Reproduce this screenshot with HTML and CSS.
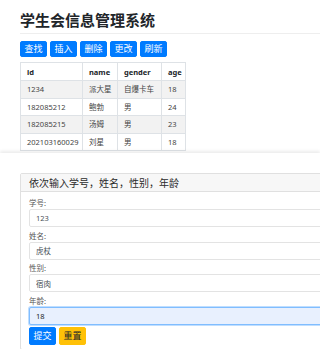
FILE: index.html
```
<!DOCTYPE html>
<html lang="zh-CN">
<head>
    <meta charset="UTF-8">
    <meta name="viewport" content="width=device-width, initial-scale=1.0">
    <title>学生会信息管理系统</title>
    <link rel="stylesheet" href="styles.css">
</head>
<body>
    <div class="container">
        <h1 class="page-header">学生会信息管理系统</h1>
        <div class="toolbar">
            <button class="btn btn-primary">查找</button>
            <button class="btn btn-primary">插入</button>
            <button class="btn btn-primary">删除</button>
            <button class="btn btn-primary">更改</button>
            <button class="btn btn-primary">刷新</button>
        </div>
        <table class="table">
            <colgroup>
                <col class="col-id">
                <col class="col-name">
                <col class="col-gender">
                <col class="col-age">
            </colgroup>
            <thead>
                <tr>
                    <th>id</th>
                    <th>name</th>
                    <th>gender</th>
                    <th>age</th>
                </tr>
            </thead>
            <tbody>
                <tr>
                    <td>1234</td>
                    <td>派大星</td>
                    <td>自爆卡车</td>
                    <td>18</td>
                </tr>
                <tr>
                    <td>182085212</td>
                    <td>鲍勃</td>
                    <td>男</td>
                    <td>24</td>
                </tr>
                <tr>
                    <td>182085215</td>
                    <td>汤姆</td>
                    <td>男</td>
                    <td>23</td>
                </tr>
                <tr>
                    <td>202103160029</td>
                    <td>刘星</td>
                    <td>男</td>
                    <td>18</td>
                </tr>
            </tbody>
        </table>
    </div>

    <div class="sheet">
        <div class="card">
            <div class="card-header">依次输入学号，姓名，性别，年龄</div>
            <form class="card-body">
                <label for="sid">学号:</label>
                <input id="sid" class="form-control" type="text" value="123">
                <label for="sname">姓名:</label>
                <input id="sname" class="form-control" type="text" value="虎杖">
                <label for="sgender">性别:</label>
                <input id="sgender" class="form-control" type="text" value="宿肉">
                <label for="sage">年龄:</label>
                <input id="sage" class="form-control is-focused" type="text" value="18">
                <div class="actions">
                    <button type="button" class="btn btn-primary btn-form">提交</button>
                    <button type="reset" class="btn btn-warning btn-form">重置</button>
                </div>
            </form>
        </div>
    </div>
</body>
</html>
```

FILE: styles.css
```
body {
    margin: 0;
    padding: 0;
    font-family: "Noto Sans", "Noto Sans CJK SC", sans-serif;
    color: #212529;
    background-color: #fff;
    overflow: hidden;
}

.container {
    padding: 0 0 0 20px;
}

.page-header {
    margin: 10px 0 0;
    padding-bottom: 3px;
    font-size: 15px;
    line-height: 20px;
    font-weight: bold;
    border-bottom: 1px solid #eee;
}

.toolbar {
    display: flex;
    gap: 3px;
    margin-top: 7px;
}

.btn {
    font-family: inherit;
    font-size: 9px;
    line-height: 14px;
    padding: 0 3.5px;
    border: 1px solid transparent;
    border-radius: 2px;
    cursor: pointer;
}

.btn-primary {
    background-color: #007bff;
    border-color: #007bff;
    color: #fff;
}

.btn-warning {
    background-color: #ffc107;
    border-color: #ffc107;
    color: #212529;
}

.table {
    margin-top: 5px;
    width: 165px;
    table-layout: fixed;
    border-collapse: collapse;
    font-size: 7.5px;
}

.col-id { width: 62px; }
.col-name { width: 35px; }
.col-gender { width: 44px; }
.col-age { width: 24px; }

.table th,
.table td {
    padding: 3px 0 3px 6px;
    line-height: 10.4px;
    text-align: left;
    border: 1px solid #dee2e6;
    white-space: nowrap;
    color: #444;
}

.table th {
    color: #212529;
    font-weight: bold;
    padding-top: 3.5px;
    padding-bottom: 3.5px;
}

.table tbody tr:nth-child(odd) td {
    background-color: #f2f2f2;
}

.sheet {
    margin-top: 2px;
    padding: 20px 0 0 20px;
    height: 177px;
    overflow: hidden;
    background-color: #fff;
    box-shadow: 0 -2px 3px rgba(0, 0, 0, 0.08);
}

.card {
    width: 340px;
    border: 1px solid #e0e0e0;
    border-radius: 2px;
}

.card-header {
    padding: 3px 9px 2px 8px;
    font-size: 10px;
    line-height: 12px;
    color: #2b2b2b;
    background-color: #f7f7f7;
    border-bottom: 1px solid #e0e0e0;
}

.card-body {
    padding: 6px 9px 4px 8px;
}

.card-body label {
    display: block;
    font-size: 7.5px;
    line-height: 11px;
    color: #555;
}

.form-control {
    display: block;
    box-sizing: border-box;
    width: 100%;
    height: 18px;
    margin: 0 0 3.6px;
    padding: 0 6px;
    font-family: inherit;
    font-size: 7.5px;
    color: #495057;
    background-color: #fff;
    border: 1px solid #e3e3e3;
    border-radius: 2px;
    outline: none;
}

.form-control.is-focused {
    color: #212529;
    background-color: #e8f0fe;
    border-color: #80bdff;
    box-shadow: 0 0 0 1px rgba(0, 123, 255, 0.25);
}

.actions {
    display: flex;
    gap: 3px;
    margin-top: -1px;
}

.btn-form {
    line-height: 16px;
    padding: 0 3.5px;
}
```
